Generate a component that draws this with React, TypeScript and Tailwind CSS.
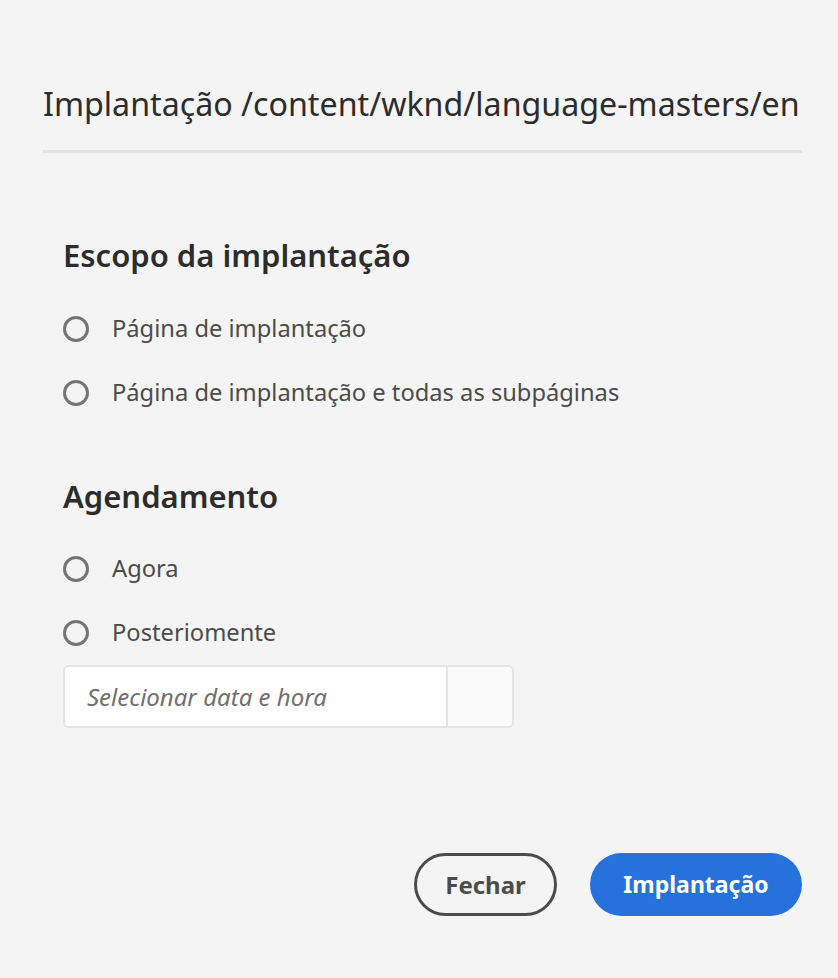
import React from 'react';

function Radio({ label }: { label: string }) {
  return (
    <label className="flex items-center h-[64px]">
      <span className="w-[26px] h-[26px] rounded-full border-[3px] border-[#747474] bg-transparent" />
      <span className="ml-[23px] text-[23.7px] text-[#4b4b4b]">{label}</span>
    </label>
  );
}

export default function App() {
  return (
    <div
      className="w-[838px] h-[978px] bg-[#f4f4f4] flex flex-col"
      style={{ fontFamily: '"Noto Sans", "Open Sans", sans-serif' }}
    >
      <div className="px-[43px] pt-[82px]">
        <h1 className="text-[32.2px] leading-[44px] text-[#2c2c2c] font-normal whitespace-nowrap">
          Implantação /content/wknd/language-masters/en
        </h1>
        <div className="mt-[24px] h-[3px] w-[759px] bg-[#e3e3e3]" />
      </div>

      <div className="pl-[63px] pr-[43px] pt-[82px] flex-1 flex flex-col">
        <h2 className="text-[31px] leading-[40px] font-semibold text-[#2c2c2c]">Escopo da implantação</h2>
        <div className="mt-[22px] flex flex-col">
          <Radio label="Página de implantação" />
          <Radio label="Página de implantação e todas as subpáginas" />
        </div>

        <h2 className="mt-[51px] text-[31px] leading-[40px] font-semibold text-[#2c2c2c]">Agendamento</h2>
        <div className="mt-[21px] flex flex-col">
          <Radio label="Agora" />
          <Radio label="Posteriomente" />
        </div>
        <div className="flex w-[451px] h-[63px] rounded-[6px] border-2 border-[#e4e4e4] overflow-hidden">
          <div className="flex-1 bg-white flex items-center pl-[22px] text-[24px] italic text-[#707070]">
            Selecionar data e hora
          </div>
          <div className="w-[66px] bg-[#fafafa] border-l-2 border-[#e4e4e4]" />
        </div>

        <div className="mt-auto mb-[62px] flex justify-end gap-[33px]">
          <button className="h-[63px] w-[143px] rounded-full border-[3px] border-[#4b4b4b] text-[24px] font-bold text-[#4b4b4b]">
            Fechar
          </button>
          <button className="h-[63px] w-[212px] rounded-full bg-[#2671dc] text-[23px] font-bold text-white mr-[-7px]">
            Implantação
          </button>
        </div>
      </div>
    </div>
  );
}
